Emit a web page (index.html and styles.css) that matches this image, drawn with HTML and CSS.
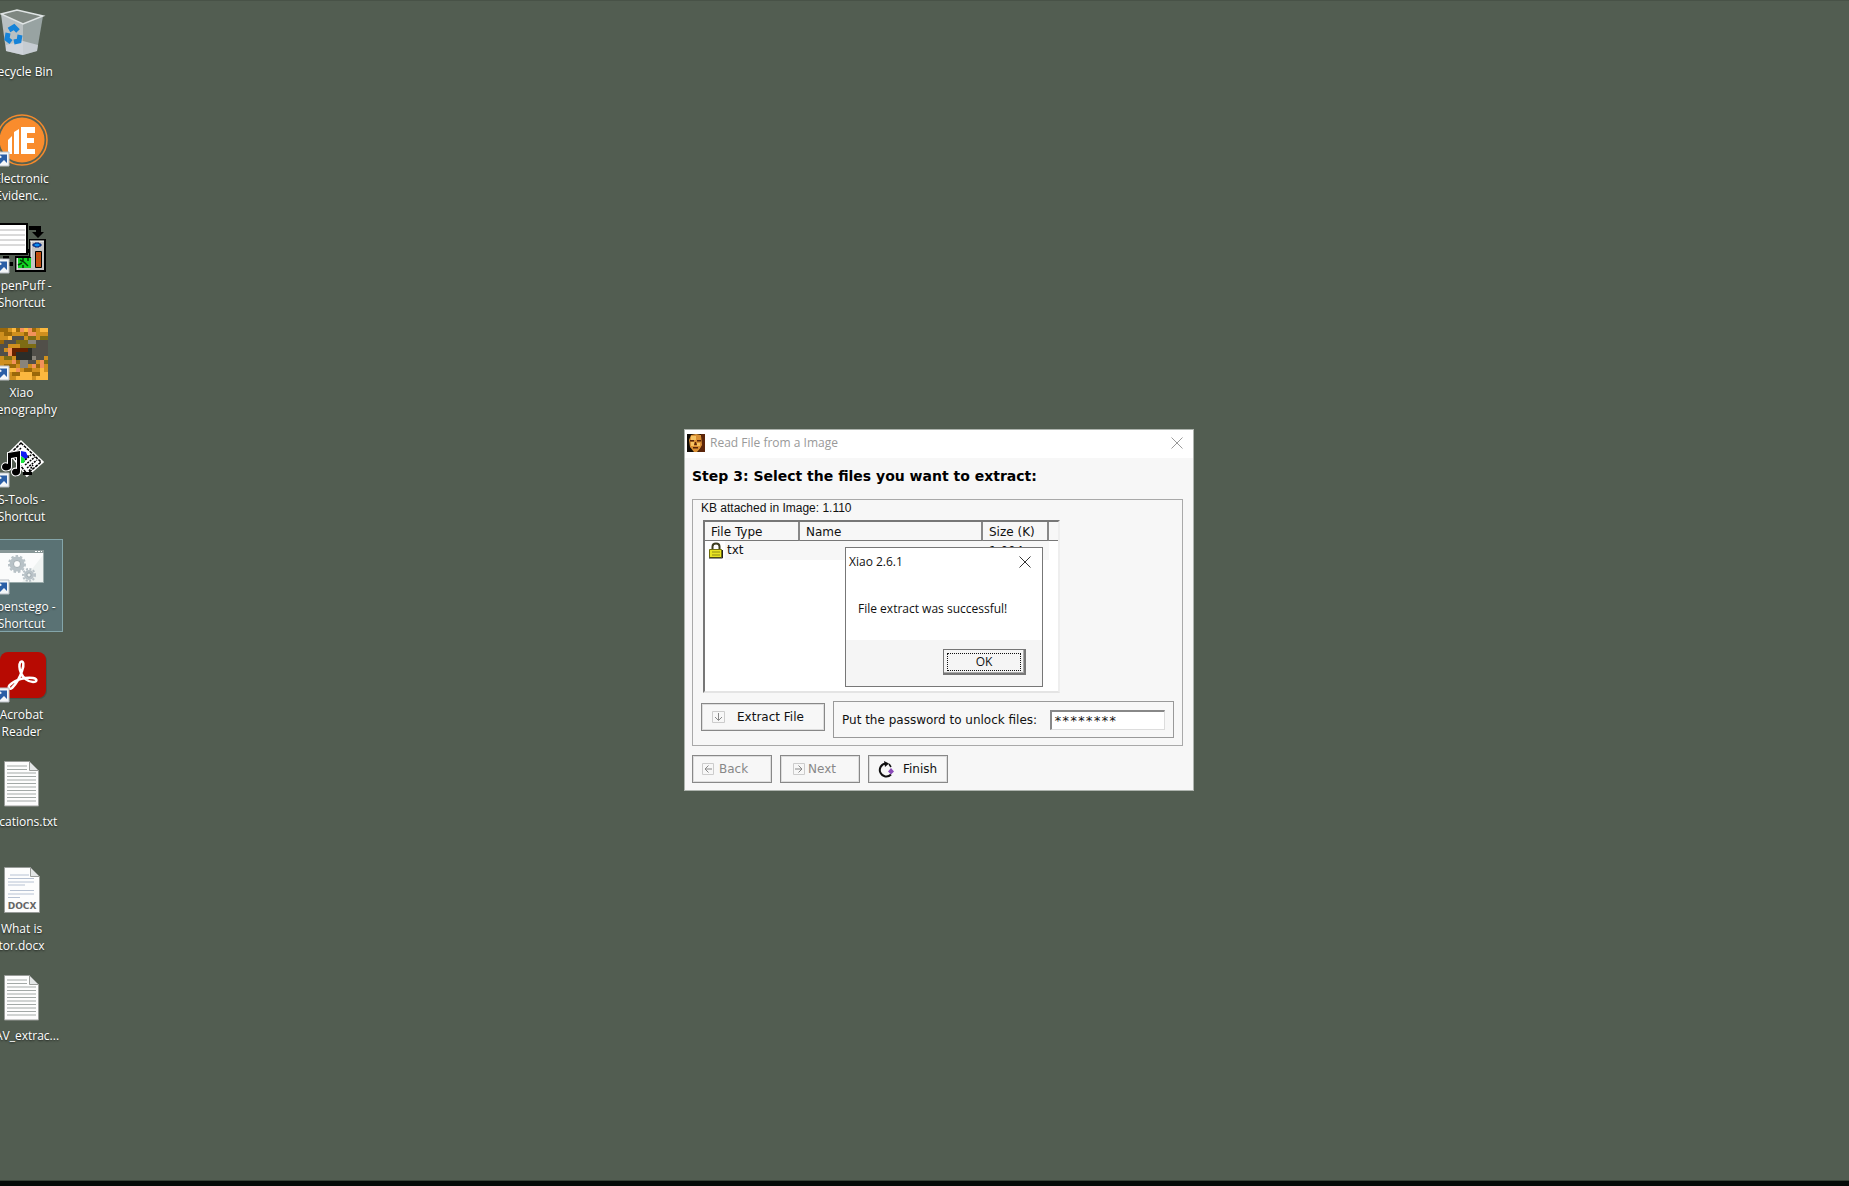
FILE: index.html
```html
<!DOCTYPE html>
<html lang="en">
<head>
<meta charset="utf-8">
<title>Desktop</title>
<link rel="stylesheet" href="styles.css">
</head>
<body>
<svg class="defs" width="0" height="0" aria-hidden="true">
  <defs>
    <g id="shortcut">
      <path d="M3 40h14v14H3z" fill="#f4f6f8" stroke="#b9bfc4"/>
      <path d="M7 42.500h8v8.500l-3-3-4 4H5v-4l5-3z" fill="#2a5ea6"/>
    </g>
    <g id="textfile">
      <path d="M12.500 6.500h25l9 9v35.500h-34z" fill="#fdfdfd" stroke="#9a9d9a"/>
      <path d="M37.500 6.500v9h9z" fill="#e3e6e6" stroke="#9a9d9a"/>
      <path d="M15 11h20M15 14.500h20M15 18h29M15 21.500h29M15 25h29M15 28.500h29M15 32h29M15 35.500h29M15 39h29M15 42.500h29M15 46h29" stroke="#a3a9a7"/>
    </g>
  </defs>
</svg>

<main class="desktop">
  <nav class="icons" aria-label="Desktop icons">
    <a class="icon" href="#">
      <svg viewBox="0 0 56 56">
        <path d="M9 9l22 10v31l-17-4z" fill="#b9c0c2"/>
        <path d="M51 11L31 19v31l14-4z" fill="#98a3a2"/>
        <path d="M14 40l17-4 15 4-1 6-14 4-17-4z" fill="#d6dae2" opacity=".75"/>
        <path d="M9 9l16-4 26 6-20 8z" fill="#7e8781" stroke="#dfe4e4" stroke-width="1.500"/>
        <g fill="none" stroke="#1583d8" stroke-width="5"><path d="M17 25l5-3 4 4M28 30l-1 6-5 1M19 37l-4-3 1-6"/></g>
      </svg>
      <span>Recycle Bin</span>
    </a>
    <a class="icon" href="#">
      <svg viewBox="0 0 56 56">
        <circle cx="30" cy="28" r="25" fill="#59614f" stroke="#f58a2c" stroke-width="1.500"/>
        <circle cx="30" cy="28" r="22.500" fill="#f98c2d"/>
        <path d="M29 15h14v6h-8v5h7v5h-7v6h8v5H29zM27 17v25h-5V20zM20 24v18h-4V28z" fill="#fff"/>
        <use href="#shortcut"/>
      </svg>
      <span>Electronic Evidenc...</span>
    </a>
    <a class="icon" href="#">
      <svg viewBox="0 0 56 56">
        <path d="M37 7h12v6h3l-6 6-6-6h4v-2h-7zM11 37h6v3h-6zM17 43h4v4h-4zM36 30h4v4h-4z" fill="#000"/>
        <path d="M0 5h35v30H0z" fill="#fff" stroke="#000" stroke-width="2"/>
        <path d="M0 11h33M0 16h33M0 21h33M0 26h33" stroke="#b4b4b4"/>
        <path d="M38 21h15v31H24V38h14z" fill="#c4c4c4" stroke="#000" stroke-width="2"/>
        <path d="M38 22h14M39 22v16M25 39v12" stroke="#fff"/>
        <path d="M41 25h2v-1h4v1h2v2h-2v1h-4v-1h-2z" fill="#0a8bf0" stroke="#001a70"/>
        <path d="M43.500 32.500h6v16h-6z" fill="#b85510" stroke="#000"/>
        <path d="M45 34v14M48 34v14" stroke="#f02f16" stroke-dasharray="1 2"/>
        <path d="M26 39h13v10H26z" fill="#10d423"/>
        <path d="M28 41l4 2 4 4M26 46l4-2M36 39v3M31 39v3M31 46v3" stroke="#023d08" stroke-width="1.500" fill="none"/>
        <use href="#shortcut"/>
      </svg>
      <span>OpenPuff - Shortcut</span>
    </a>
    <a class="icon" href="#">
      <svg viewBox="0 0 56 56">
        <svg x="4" y="2" width="52" height="52" viewBox="0 0 13 13" shape-rendering="crispEdges" fill="none">
          <path d="M0 0h13v13H0z" fill="#cf8f1e"/>
          <path d="M0 .5h3M5 .5h1M9 .5h1M2 1.500h2M7 1.500h1M0 3.500h2M5 8.500h1M2 9.500h3M7 10.500h2M10 9.500h2M4 11.500h2M9 11.500h2" stroke="#9a680a"/>
          <path d="M4 .5h1M7 .5h1M11 .5h2M3 2.500h1M6 11.500h3M11 11.500h2M5 12.500h4M10 12.500h3M3 10.500h2M11 10.500h1" stroke="#fbb83f"/>
          <path d="M6 .5h1M8 .5h1M8 1.500h2M3 5.500h2M3 6.500h1M4 8.500h1M11 8.500h1M11 9.500h1M9 9.500h1M5 10.500h1" stroke="#f2915a"/>
          <path d="M4 2.500h3M2 3.500h3M10 3.500h3M0 4.500h3M10 4.500h3M0 5.500h2M9 5.500h4M9 6.500h4M1 6.500h2M5 7.500h1M10 7.500h2M8 8.500h2" stroke="#514f49"/>
          <path d="M5 3.500h3M6 4.500h4M8 2.500h2M11 2.500h2M2 7.500h2M12 8.500h1" stroke="#7d6c14"/>
          <path d="M6 8.500h2M9 7.500h1M8 3.500h2M6 9.500h2" stroke="#89847b"/>
          <path d="M4 5.500h4M4 6.500h1" stroke="#642000"/>
          <path d="M5 6.500h4M5 7.500h4M8 5.500h1" stroke="#2b2d29"/>
        </svg>
        <use href="#shortcut"/>
      </svg>
      <span>Xiao Stenography</span>
    </a>
    <a class="icon" href="#">
      <svg viewBox="0 0 56 56">
        <path d="M29 9l21 20-15 13-17-22z" fill="#fff" stroke="#fff" stroke-width="3"/>
        <path d="M29 10l20 19-14 12-16-21z" fill="#fff" stroke="#000" stroke-width="1.500" stroke-dasharray="3 1"/>
        <path d="M31 29l9-8M33 32l10-8M35 35l10-8M29 15l-5 5M33 26l4-4M37 38l4-6" stroke="#000" stroke-width="1.500" stroke-dasharray="2 1"/>
        <path d="M29 18l5 1 2 5-3 2-4-3z" fill="#1019f4"/><path d="M29 23l4 3-1 4h-3z" fill="#18e53a"/>
        <g stroke="#fff" stroke-width="2" paint-order="stroke" fill="#000">
          <path d="M16 20l12-2v21c0 4-8 5-8 0 0-3 3-4 5-3V24l-6 1v9c0 4-9 5-9 0 0-3 3-5 6-3z"/>
        </g>
        <path d="M31 39h9v3h-9z"/>
        <use href="#shortcut"/>
      </svg>
      <span>S-Tools - Shortcut</span>
    </a>
    <a class="icon selected" href="#">
      <svg viewBox="0 0 56 56">
        <path d="M0 10.500h51.500v32H0z" fill="#fbfcfc" stroke="#9aabab"/>
        <path d="M0 10h52v3H0z" fill="#889797"/>
        <path d="M43 11.500h7" stroke="#fff" stroke-dasharray="2 1"/>
        <path d="M51 15v27H30z" fill="#eff3f2"/>
        <g fill="none" stroke="#b8c2c7">
          <circle cx="25" cy="24" r="5.500" stroke-width="4"/><circle cx="25" cy="24" r="8" stroke-width="2" stroke-dasharray="2.500 2"/>
          <circle cx="37" cy="35" r="3.500" stroke-width="3"/><circle cx="37" cy="35" r="6" stroke-width="2" stroke-dasharray="2 1.500"/>
        </g>
        <g fill="none" stroke="#8e9ba1" stroke-width=".7"><circle cx="25" cy="24" r="3.500"/><circle cx="37" cy="35" r="2"/></g>
        <use href="#shortcut"/>
      </svg>
      <span>Openstego - Shortcut</span>
    </a>
    <a class="icon" href="#">
      <svg viewBox="0 0 56 56">
        <rect x="9" y="5" width="46" height="46" rx="8" fill="#39423a" opacity=".5"/>
        <rect x="8" y="4" width="46" height="46" rx="8" fill="#b70a02"/>
        <path d="M28.500 14c3-2 4 2 1.500 9-2 6-6 13-10 17-3 2-5-1-1-4 4-4 14-7 22-6 5 1 4 4 0 4-5 0-10-4-12-9-2-4-2-9-.5-11z" fill="none" stroke="#fff" stroke-width="2.500"/>
        <use href="#shortcut"/>
      </svg>
      <span>Acrobat Reader</span>
    </a>
    <a class="icon" href="#">
      <svg viewBox="0 0 56 56"><use href="#textfile"/></svg>
      <span>Locations.txt</span>
    </a>
    <a class="icon" href="#">
      <svg viewBox="0 0 56 56">
        <path d="M12.500 5.500h26l9 9v36h-35z" fill="#fdfdfd" stroke="#9a9d9a"/>
        <path d="M38.500 5.500v9h9z" fill="#e3e6e6" stroke="#9a9d9a"/>
        <path d="M18 13h19M16 16.500h26M16 20h26M16 23h17M18 28.500h24M16 32h26M16 35.500h12" stroke="#b7c2d3"/>
        <text x="30" y="47" class="ext">DOCX</text>
      </svg>
      <span>What is tor.docx</span>
    </a>
    <a class="icon" href="#">
      <svg viewBox="0 0 56 56"><use href="#textfile"/></svg>
      <span>WAV_extrac...</span>
    </a>
  </nav>

  <section class="window" role="dialog" aria-label="Read File from a Image">
    <header class="titlebar">
      <svg class="app" viewBox="0 0 18 18">
        <path d="M0 0h18v18H0z" fill="#120c06"/>
        <path d="M4 1l5-1 5 1 2 5-1 7-5 5H7l-4-5-1-7z" fill="#d98f34"/>
        <path d="M4 2h5v4H4zM4 8h3v4H4zM10 9h3v3h-3z" fill="#f5c262"/>
        <path d="M3 6h4v1.500H3zM10 6h4v1.500h-4zM8 8l-1 3h3l-1-3M6 13h5v1.500H6zM14 1l1 10-4 7h7V0h-4z" fill="#5b250a"/>
      </svg>
      <span>Read File from a Image</span>
      <button class="close" type="button" aria-label="Close window"><svg viewBox="0 0 12 12"><path d="M.5.5l11 11M11.500.5l-11 11"/></svg></button>
    </header>
    <form class="wizard">
      <h1>Step 3: Select the files you want to extract:</h1>
      <div class="group">
        <p class="caption">KB attached in Image: 1.110</p>
        <div class="list">
          <table>
            <colgroup><col class="c-type"><col class="c-name"><col class="c-size"><col></colgroup>
            <thead><tr><th>File Type</th><th>Name</th><th>Size (K)</th><th></th></tr></thead>
            <tbody><tr>
              <td class="type"><svg viewBox="0 0 14 17"><path d="M3.500 8V4.500c0-4 7-4 7 0V8" fill="none" stroke="#3d3d20" stroke-width="2"/><path d="M.5 7.500h12v8H.5z" fill="#e8e322" stroke="#6e6c0a"/><path d="M3 10h8M3 13h8" stroke="#8e8b14"/><path d="M0 16h13.500V8" fill="none" stroke="#222"/></svg><span>txt</span></td>
              <td></td><td>1.004</td><td></td>
            </tr></tbody>
          </table>
        </div>
        <div class="actions">
          <button class="btn extract" type="button">
            <svg viewBox="0 0 13 12"><path class="box" d="M.5.5h12v11H.5z"/><path d="M6.500 2v7M3 6l3.500 3.500L10 6"/></svg>Extract File
          </button>
          <div class="password">
            <label for="pw">Put the password to unlock files:</label>
            <input id="pw" type="text" value="********">
          </div>
        </div>
      </div>
      <footer class="steps">
        <button class="btn" type="button" disabled><svg viewBox="0 0 13 12"><path class="box" d="M1.500.5h11v11h-11z"/><path d="M11 6H4M7.500 2.500L4 6l3.500 3.500"/></svg>Back</button>
        <button class="btn next" type="button" disabled><svg viewBox="0 0 13 12"><path class="box" d="M1.500.5h11v11h-11z"/><path d="M3 6h7M6.500 2.500L10 6 6.500 9.500"/></svg>Next</button>
        <button class="btn finish" type="button"><svg viewBox="0 0 17 17"><path d="M9 2.500a6.500 6.500 0 1 0 5 11" fill="none" stroke="#111" stroke-width="2"/><path d="M7 0l5 2.500L8 6z" fill="#111"/><path d="M12 3l2 3" stroke="#111" stroke-width="1.500"/><path d="M14 7l3 3.500-3 3-3-3z" fill="#8a4bb8"/></svg>Finish</button>
      </footer>
    </form>
  </section>

  <section class="message" role="alertdialog" aria-label="Xiao 2.6.1">
    <header>
      <span>Xiao 2.6.1</span>
      <button class="close" type="button" aria-label="Close message"><svg viewBox="0 0 12 12"><path d="M.5.5l11 11M11.500.5l-11 11"/></svg></button>
    </header>
    <p>File extract was successful!</p>
    <footer><button class="ok" type="button"><span>OK</span></button></footer>
  </section>
</main>
<div class="taskbar"></div>
</body>
</html>
```
FILE: styles.css
```css
* { box-sizing: border-box; }

body {
  margin: 0;
  height: 100vh;
  display: flex;
  flex-direction: column;
  overflow: hidden;
  background: #525d51;
  color: #111;
  font: 12px/16px "Open Sans", sans-serif;
}

.defs { position: absolute; }

.desktop {
  position: relative;
  flex: 1;
  min-height: 0;
  border-top: 1px solid #485247;
}

.taskbar {
  height: 6px;
  background: #050a07;
  border-top: 1px solid #384237;
}

/* Desktop icons */
.icons {
  display: grid;
  grid-template-rows: repeat(11, 1fr);
  width: 85px;
  height: 100%;
  margin-left: -22px;
  padding-top: 1px;
}

.icon {
  align-self: start;
  display: flex;
  flex-direction: column;
  align-items: center;
  margin-top: 2px;
  height: 93px;
  border: 1px solid transparent;
  color: #fff;
  text-align: center;
  text-decoration: none;
  text-shadow: 0 1px 2px #000a;
}

.icon svg { width: 56px; height: 56px; flex: none; }
.icon > svg { margin-right: 2px; }
.icon svg svg { width: 52px; height: 52px; }
.icon span { width: 83px; padding-left: 2px; margin-top: 2px; line-height: 17px; }
.icon.selected { background: #5a7274; border-color: #84a5a9; }
.ext { font: bold 9px "DejaVu Sans", sans-serif; fill: #666; text-anchor: middle; text-shadow: none; }

/* Wizard window */
.window {
  position: absolute;
  left: 684px;
  top: 428px;
  width: 510px;
  border: 1px solid #aeb4ae;
  background: #f7f7f7;
  font-family: "DejaVu Sans", sans-serif;
}

.titlebar {
  display: flex;
  align-items: center;
  gap: 5px;
  height: 28px;
  padding: 0 10px 2px 2px;
  background: #fff;
  color: #999;
  font-family: "Open Sans", sans-serif;
}

.app { width: 18px; height: 18px; }

.close {
  margin-left: auto;
  padding: 0;
  border: 0;
  background: none;
  display: flex;
}
.close svg { width: 12px; height: 12px; fill: none; stroke: #333; }
.titlebar .close svg { stroke: #999; }

.wizard { padding: 0 10px 7px 7px; }

h1 {
  margin: 0 0 5px;
  font-size: 14px;
  line-height: 36px;
  color: #000;
}

.group {
  padding: 0 8px 7px;
  border: 1px solid #a9a9a9;
}

.caption {
  margin: 0 0 3px;
  line-height: 17px;
  font-family: "Liberation Sans", sans-serif;
}

.list {
  width: 357px;
  height: 173px;
  margin-left: 2px;
  border: 2px solid #777;
  border-right-color: #eee;
  border-bottom-color: #e4e4e4;
  background: #fff;
}

table {
  width: 100%;
  table-layout: fixed;
  border-collapse: separate;
  border-spacing: 0;
}
.c-type { width: 95px; }
.c-name { width: 183px; }
.c-size { width: 66px; }
th {
  height: 19px;
  padding: 1px 0 0 6px;
  border-right: 2px solid #888;
  border-bottom: 1px solid #777;
  background: #f7f7f7;
  font-weight: normal;
  text-align: left;
}
th:last-child { border-right: 0; }
td { height: 19px; padding: 0 6px; background: #f7f7f7; }
td:last-child { background: #fff; }
.type {
  display: flex;
  align-items: center;
  gap: 2px;
  padding: 0 0 0 4px;
  background: #fff;
}
.type svg { width: 14px; height: 17px; }
.type span { flex: 1; padding-left: 2px; line-height: 19px; background: #f7f7f7; }

.actions {
  display: flex;
  align-items: flex-start;
  gap: 8px;
  margin-top: 8px;
}

.btn {
  display: flex;
  align-items: center;
  width: 80px;
  height: 28px;
  gap: 5px;
  padding: 0 8px;
  border: 1px solid #888;
  background: #f7f7f7;
  box-shadow: inset 0 0 0 1px #ddd;
  color: #111;
  font: inherit;
}
.btn svg { width: 13px; height: 12px; fill: none; stroke: #888; }
.btn .box { stroke: #ccc; }
.btn:disabled { color: #888; }
.next { padding-left: 11px; gap: 3px; }
.extract { width: 124px; margin-top: 2px; padding: 0 10px; gap: 12px; }
.finish { gap: 9px; }
.finish svg { width: 17px; height: 17px; stroke: none; }

.password {
  flex: 1;
  display: flex;
  align-items: center;
  justify-content: space-between;
  height: 37px;
  padding: 0 8px;
  border: 1px solid #999;
}
.password input {
  width: 115px;
  height: 20px;
  padding: 0 2px;
  border: 2px solid #888;
  border-right: 1px solid #ddd;
  border-bottom: 1px solid #ddd;
  background: #fff;
  color: #111;
  font: 13px "DejaVu Sans Mono", monospace;
}

.steps {
  display: flex;
  gap: 8px;
  margin-top: 9px;
}

/* Message box */
.message {
  position: absolute;
  left: 845px;
  top: 546px;
  width: 198px;
  border: 1px solid #777;
  background: #fff;
}
.message header {
  display: flex;
  align-items: center;
  height: 28px;
  padding: 0 11px 0 3px;
}
.message p { margin: 0; padding: 25px 12px 23px; }
.message footer {
  display: flex;
  justify-content: flex-end;
  padding: 9px 16px 11px;
  background: #f5f5f5;
}
.ok {
  width: 83px;
  height: 26px;
  padding: 3px;
  border: 1px solid #777;
  border-right: 2px solid #777;
  border-bottom: 2px solid #777;
  background: #f5f5f5;
  box-shadow: inset -1px -1px #aaa;
  color: #111;
  font: inherit;
}
.ok span { display: block; line-height: 16px; border: 1px dotted #111; }
```
